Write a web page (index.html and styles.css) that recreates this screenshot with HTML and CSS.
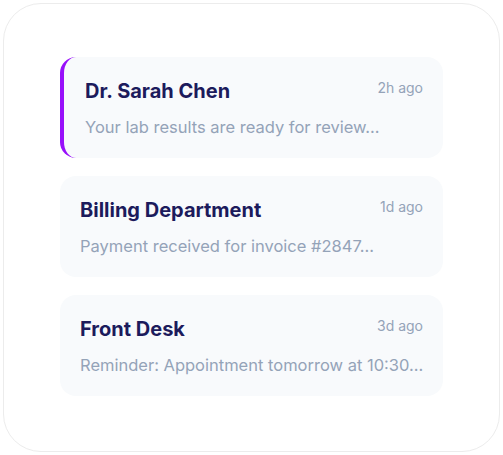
FILE: index.html
```html
<!DOCTYPE html>
<html>
<head>
<meta charset="utf-8">
<link rel="stylesheet" href="styles.css">
</head>
<body>
<div class="panel">
  <div class="list">
    <div class="msg unread">
      <div class="row">
        <div class="name">Dr. Sarah Chen</div>
        <div class="time">2h ago</div>
      </div>
      <div class="preview">Your lab results are ready for review...</div>
    </div>
    <div class="msg">
      <div class="row">
        <div class="name">Billing Department</div>
        <div class="time">1d ago</div>
      </div>
      <div class="preview">Payment received for invoice #2847...</div>
    </div>
    <div class="msg">
      <div class="row">
        <div class="name">Front Desk</div>
        <div class="time">3d ago</div>
      </div>
      <div class="preview">Reminder: Appointment tomorrow at 10:30...</div>
    </div>
  </div>
</div>
</body>
</html>
```
FILE: styles.css
```css
html, body {
  margin: 0;
  padding: 0;
  background: #ffffff;
}
body {
  padding: 3px;
  font-family: Inter, "Noto Sans", sans-serif;
}
.panel {
  box-sizing: border-box;
  width: 497px;
  height: 449px;
  border: 1px solid #ececec;
  border-radius: 38px;
  padding: 53px 56px;
  background: #fff;
}
.list {
  display: flex;
  flex-direction: column;
  gap: 18px;
}
.msg {
  box-sizing: border-box;
  height: 101px;
  background: #f8fafc;
  border-radius: 16px;
  padding: 21px 20px 0 20px;
}
.msg.unread {
  border-left: 4px solid #9810fa;
  padding-left: 21px;
}
.row {
  display: flex;
  justify-content: space-between;
  align-items: flex-start;
}
.name {
  font-size: 20px;
  font-weight: 700;
  line-height: 26px;
  color: #1c1b5c;
}
.time {
  font-size: 14px;
  line-height: 20px;
  color: #94a3b8;
}
.preview {
  margin-top: 12px;
  font-size: 16.5px;
  line-height: 22px;
  color: #94a3b8;
  white-space: nowrap;
}
```
